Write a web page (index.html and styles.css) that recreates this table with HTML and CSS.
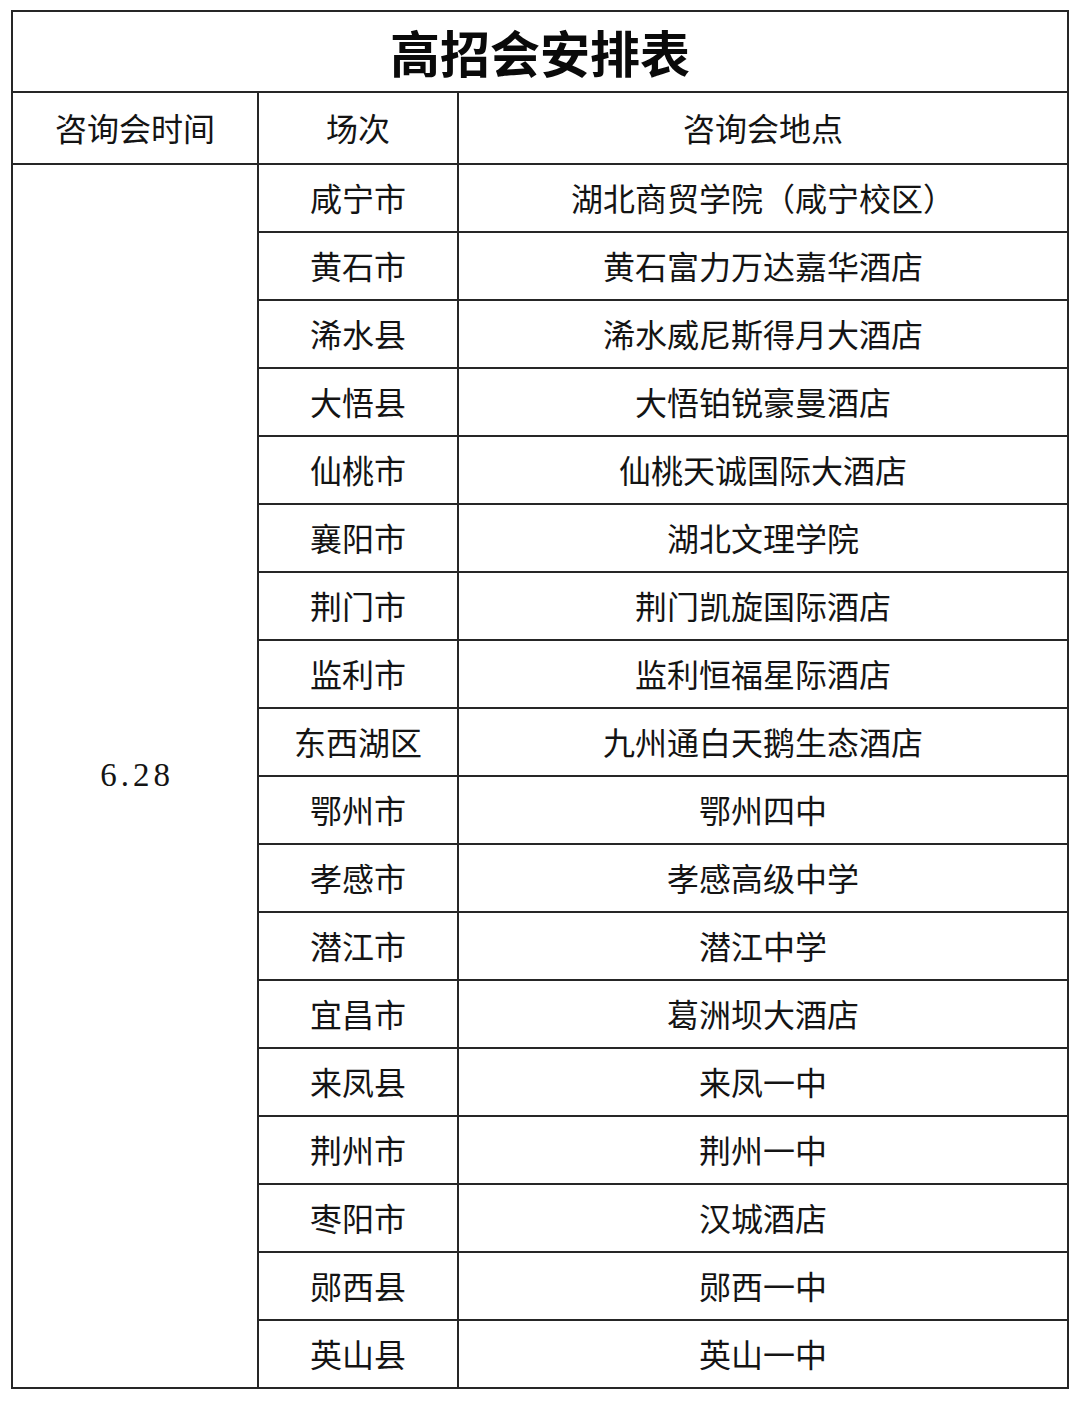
FILE: index.html
```html
<!DOCTYPE html>
<html lang="zh-CN">
<head>
<meta charset="utf-8">
<title>高招会安排表</title>
<link rel="stylesheet" href="styles.css">
</head>
<body>
<table class="sched">
  <colgroup>
    <col class="c-time">
    <col class="c-city">
    <col class="c-place">
  </colgroup>
  <tr class="title-row"><td colspan="3" class="title">高招会安排表</td></tr>
  <tr class="head-row"><td>咨询会时间</td><td>场次</td><td>咨询会地点</td></tr>
  <tr><td rowspan="18" class="date">6.28</td><td>咸宁市</td><td>湖北商贸学院（咸宁校区）</td></tr>
  <tr><td>黄石市</td><td>黄石富力万达嘉华酒店</td></tr>
  <tr><td>浠水县</td><td>浠水威尼斯得月大酒店</td></tr>
  <tr><td>大悟县</td><td>大悟铂锐豪曼酒店</td></tr>
  <tr><td>仙桃市</td><td>仙桃天诚国际大酒店</td></tr>
  <tr><td>襄阳市</td><td>湖北文理学院</td></tr>
  <tr><td>荆门市</td><td>荆门凯旋国际酒店</td></tr>
  <tr><td>监利市</td><td>监利恒福星际酒店</td></tr>
  <tr><td>东西湖区</td><td>九州通白天鹅生态酒店</td></tr>
  <tr><td>鄂州市</td><td>鄂州四中</td></tr>
  <tr><td>孝感市</td><td>孝感高级中学</td></tr>
  <tr><td>潜江市</td><td>潜江中学</td></tr>
  <tr><td>宜昌市</td><td>葛洲坝大酒店</td></tr>
  <tr><td>来凤县</td><td>来凤一中</td></tr>
  <tr><td>荆州市</td><td>荆州一中</td></tr>
  <tr><td>枣阳市</td><td>汉城酒店</td></tr>
  <tr><td>郧西县</td><td>郧西一中</td></tr>
  <tr><td>英山县</td><td>英山一中</td></tr>
</table>
</body>
</html>
```

FILE: styles.css
```css
html, body {
  margin: 0;
  padding: 0;
  background: #ffffff;
}
body {
  padding: 10px 0 0 11px;
  font-family: "Liberation Serif", "Noto Sans CJK SC", serif;
  color: #141414;
}
.sched {
  border-collapse: collapse;
  width: 1056px;
  table-layout: fixed;
}
.c-time { width: 246px; }
.c-city { width: 200px; }
.c-place { width: 610px; }
.sched td {
  border: 2px solid #262626;
  text-align: center;
  vertical-align: middle;
  padding: 0 0 2px;
  height: 64px;
  font-size: 32px;
  line-height: 1;
  font-family: "Noto Sans CJK SC", sans-serif;
}
.sched .title-row td {
  height: 77px;
  font-size: 50px;
  font-weight: 700;
  color: #0a0a0a;
}
.sched .head-row td {
  height: 68px;
}
.sched td.date {
  font-family: "Liberation Serif", serif;
  font-size: 33px;
  letter-spacing: 4px;
  text-indent: 4px;
}
```
